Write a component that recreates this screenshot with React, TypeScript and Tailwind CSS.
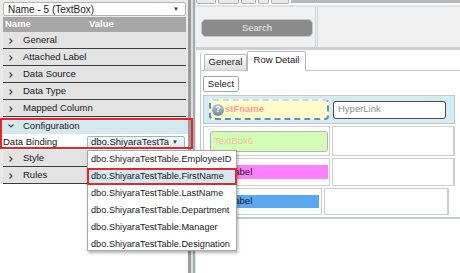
import React from 'react';

const Chevron = ({ down }: { down?: boolean }) => (
  <svg width="8" height="8" viewBox="0 0 8 8" className="shrink-0">
    {down ? (
      <path d="M1.5 2.5 L4 5 L6.5 2.5" stroke="#4a4a4a" strokeWidth="1.2" fill="none" />
    ) : (
      <path d="M2.5 1.5 L5 4 L2.5 6.5" stroke="#4a4a4a" strokeWidth="1.2" fill="none" />
    )}
  </svg>
);

const Arrow = () => <span className="text-[6px] text-[#333]">▼</span>;

const GROUPS_TOP = ['General', 'Attached Label', 'Data Source', 'Data Type', 'Mapped Column'];
const GROUPS_BOTTOM = ['Style', 'Rules'];

const OPTIONS = [
  'dbo.ShiyaraTestTable.EmployeeID',
  'dbo.ShiyaraTestTable.FirstName',
  'dbo.ShiyaraTestTable.LastName',
  'dbo.ShiyaraTestTable.Department',
  'dbo.ShiyaraTestTable.Manager',
  'dbo.ShiyaraTestTable.Designation',
];

const GroupRow = ({ label }: { label: string }) => (
  <div className="h-[17px] ml-[3px] mr-[2px] bg-[#e3e3e3] border-b border-[#3c3c3c] flex items-center pl-[4px] pt-[1px] gap-[8px]">
    <Chevron />
    <span>{label}</span>
  </div>
);

export default function App() {
  return (
    <div className="relative w-[460px] h-[273px] overflow-hidden bg-white flex font-['Liberation_Sans',Arial,sans-serif] text-[9.5px] text-[#1a1a1a]">
      {/* Property grid */}
      <div className="w-[188px] flex flex-col">
        <div className="bg-[#eaeaea]">
          <div className="h-[17px] pt-[2px] pl-[3px] pr-[2px]">
            <div className="h-[14px] bg-white border border-[#b4b4b4] rounded-[2px] flex items-center justify-between pl-[4px] pr-[6px]">
              <span className="text-[10px]">Name - 5 (TextBox)</span>
              <Arrow />
            </div>
          </div>
          <div className="h-[15px] ml-[3px] mr-[2px] bg-[#a6a6a6] text-white font-bold flex items-center">
            <span className="w-[86px] pl-[2px]">Name</span>
            <span>Value</span>
          </div>
          {GROUPS_TOP.map((g) => (
            <GroupRow key={g} label={g} />
          ))}
          <div className="h-[17px] bg-[#d4e8ef] flex items-center pl-[7px] pt-[1px] gap-[8px]">
            <Chevron down />
            <span>Configuration</span>
          </div>
          <div className="h-[16px] flex items-center bg-white">
            <span className="w-[87px] pl-[3px]">Data Binding</span>
            <div className="w-[98px] h-[13px] border border-[#9fb3bf] rounded-[2px] bg-gradient-to-b from-[#f4fafd] to-[#d9ebf3] flex items-center justify-between pl-[3px] pr-[6px]">
              <span className="whitespace-nowrap overflow-hidden">dbo.ShiyaraTestTa</span>
              <Arrow />
            </div>
          </div>
          {GROUPS_BOTTOM.map((g) => (
            <GroupRow key={g} label={g} />
          ))}
        </div>
        <div className="flex-1 bg-white" />
      </div>

      {/* Splitter */}
      <div className="w-[8px] flex">
        <div className="w-[3px] bg-[#9b9b9b]" />
        <div className="w-[2px] bg-[#dedede]" />
        <div className="w-[2px] bg-[#a3abb1]" />
        <div className="w-[1px] bg-[#e6e6e6]" />
      </div>

      {/* Designer */}
      <div className="flex-1 flex flex-col">
        <div className="h-[5px] flex items-start bg-white">
          {[20, 21, 15, 11, 18].map((w, i) => (
            <div key={i} className="h-[4px] border border-t-0 border-[#a9b2b8] bg-[#e6eaed] rounded-b-[2px] mr-[2px]" style={{ width: w }} />
          ))}
          <div className="flex-1 h-[3px] bg-[#b7b7b7]" />
        </div>
        <div className="h-[2px] bg-[#dde3e6]" />
        <div className="h-[43px] bg-[#f1f1f1] border-b-[3px] border-[#c9d1d6] flex">
          <div className="w-[119px] pl-[5px] pt-[12px]">
            <div className="w-[112px] h-[18px] rounded-[5px] bg-[#8b8b8b] border border-[#c6c6c6] flex items-center justify-center text-[#ececec]">
              Search
            </div>
          </div>
          <div className="w-[3px] border-x border-[#cfd4d7]" />
          <div className="flex-1" />
        </div>

        <div className="flex-1 pl-[4px]">
          <div className="border-l border-[#c2c8cc] rounded-tl-[5px] border-t border-t-transparent">
            <div className="h-[20px] flex items-end pl-[3px] border-b border-[#c2cace]">
              <div className="w-[43px] h-[16px] border border-b-0 border-[#b4b9bd] rounded-t-[2px] bg-gradient-to-b from-white to-[#dedede] flex items-center justify-center">
                General
              </div>
              <div className="w-[59px] h-[20px] -mb-px bg-white border border-b-0 border-[#b4b9bd] rounded-t-[2px] flex items-center justify-center pb-[2px]">
                Row Detail
              </div>
            </div>
            <div className="pl-[2px] pt-[5px] pb-[2px] border-b-2 border-[#c4ccd0]">
              <div className="w-[36px] h-[16px] border border-[#a6a6a6] rounded-[2px] bg-white flex items-center justify-center">
                Select
              </div>
              <div className="mt-[3px] mr-[5px] flex flex-col gap-[2px]">
                {/* row 1 */}
                <div className="h-[29px] bg-[#d5ecf5] border border-[#bccbd3] flex items-center pl-[5px] gap-[4px]">
                  <div className="w-[120px] h-[21px] bg-[#fffbc8] border-2 border-dashed border-[#5d8fc0] border-t-[#c8d8e8] rounded-[4px] flex items-center pl-[1px] gap-[1px]">
                    <span className="w-[12px] h-[12px] rounded-full bg-gradient-to-b from-[#b7c7d6] to-[#6f8aa3] text-white font-bold text-[9px] flex items-center justify-center">?</span>
                    <span className="text-[#ff9a9a] font-bold">stFname</span>
                  </div>
                  <div className="w-[113px] h-[18px] bg-white border border-[#4a4a4a] rounded-[3px] flex items-center pl-[4px] text-[#8a8a8a]">
                    HyperLink
                  </div>
                </div>
                {/* row 2 */}
                <div className="h-[30px] flex gap-[2px]">
                  <div className="w-[127px] border border-[#cfcfcf] flex items-center pl-[6px] pr-[1px]">
                    <div className="flex-1 h-[21px] bg-[#d3fcb6] border border-[#b2b2b2] rounded-[3px] flex items-center pl-[3px] text-[#f3c2a6]">
                      TextBox6
                    </div>
                  </div>
                  <div className="flex-1 border border-[#cfcfcf] border-r-2" />
                </div>
                {/* row 3 */}
                <div className="h-[28px] flex gap-[2px]">
                  <div className="w-[127px] border border-[#cfcfcf] flex items-center pl-[5px] pr-[1px]">
                    <div className="flex-1 h-[14px] bg-[#ff80ff] flex items-center pl-[20px]">Label</div>
                  </div>
                  <div className="flex-1 border border-[#cfcfcf] border-r-2" />
                </div>
                {/* row 4 */}
                <div className="h-[27px] flex gap-[2px] pr-[6px]">
                  <div className="w-[119px] border border-[#cfcfcf] flex items-center pl-[5px] pr-[2px]">
                    <div className="flex-1 h-[13px] bg-[#5aa7f2] flex items-center pl-[20px]">Label</div>
                  </div>
                  <div className="flex-1 border border-[#cfcfcf] border-r-2" />
                </div>
              </div>
            </div>
          </div>
        </div>
      </div>

      {/* highlight on the Configuration group */}
      <div className="absolute left-0 top-[118px] w-[193px] h-[31px] border-2 border-[#e5262b]" />

      {/* open data binding list */}
      <div className="absolute left-[87px] top-[150px] w-[150px] h-[101px] bg-white border border-[#a9a9a9] shadow-[1px_2px_3px_rgba(0,0,0,0.3)] text-[9.2px]">
        {OPTIONS.map((o, i) => (
          <div
            key={o}
            className={
              i === 1
                ? 'h-[17px] flex items-center pl-[2px] pt-[1px] bg-[#d4e9f3] border-2 border-[#e5262b] -mx-px'
                : 'h-[17px] flex items-center pl-[3px] pt-[1px]'
            }
          >
            {o}
          </div>
        ))}
      </div>
    </div>
  );
}
